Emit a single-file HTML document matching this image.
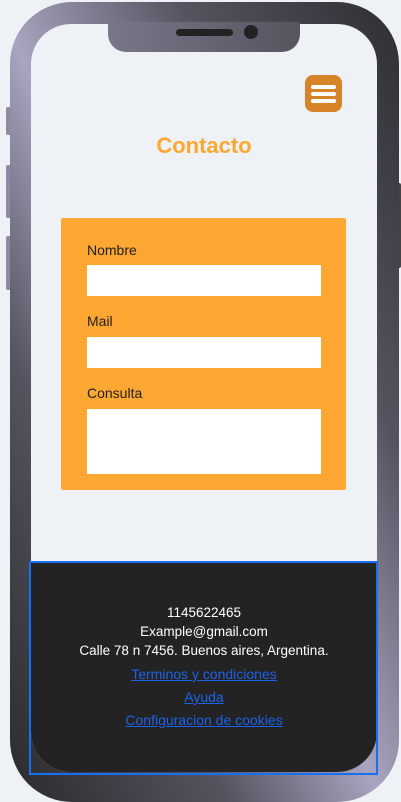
<!DOCTYPE html>
<html><head><meta charset="utf-8"><style>
body{margin:0;width:401px;height:793px;background:#eef1f6;position:relative;overflow:hidden;font-family:"Liberation Sans",sans-serif}
.frame{position:absolute;left:10px;top:2px;width:389px;height:800px;border-radius:62px;
background:linear-gradient(to bottom left,#2e2e33 0%,#55535f 28%,#a9a4c0 52%,#55535f 72%,#2a2a2c 100%);}
.btn{position:absolute;background:#8f8aa3;border-radius:2px}
.screen{position:absolute;left:31px;top:24px;width:346px;height:748px;background:#eef1f6;border-radius:40px;overflow:hidden}
.notch{position:absolute;left:108px;top:22px;width:192px;height:30px;background:linear-gradient(90deg,#7a7689,#56545f);border-radius:0 0 18px 18px}
.spk{position:absolute;left:176px;top:29px;width:57px;height:7px;border-radius:4px;background:#222}
.cam{position:absolute;left:244px;top:25px;width:14px;height:14px;border-radius:50%;background:#222}
.menu{position:absolute;left:274px;top:51px;width:37px;height:37px;background:#d78428;border-radius:8px}
.menu i{position:absolute;left:6px;width:25px;height:4px;background:#fff;border-radius:2px}
h1{position:absolute;left:0;width:346px;top:109px;margin:0;text-align:center;color:#ffa733;font-size:22px;font-weight:bold}
.form{position:absolute;left:30px;top:194px;width:285px;height:272px;background:#ffa733;border-radius:2px}
.form label{position:absolute;left:26px;font-size:14px;color:#222}
.form div{position:absolute;left:26px;width:234px;background:#fff}
.foot{position:absolute;left:0;top:537px;width:346px;height:211px;background:#232323;color:#fff;text-align:center;font-size:13.5px}
.foot a{color:#1d63e8;text-decoration:underline;display:block;font-size:14px}
.bb{position:absolute;left:29px;top:561px;width:345px;height:210px;border:2px solid #1a6ef0}
</style></head><body>
<div class="btn" style="left:6px;top:107px;width:5px;height:28px"></div>
<div class="btn" style="left:6px;top:165px;width:5px;height:53px"></div>
<div class="btn" style="left:6px;top:236px;width:5px;height:54px"></div>
<div class="btn" style="left:396px;top:183px;width:5px;height:85px;background:#444"></div>
<div class="frame"></div>
<div class="screen">
<div class="menu"><i style="top:10px"></i><i style="top:17px"></i><i style="top:24px"></i></div>
<h1>Contacto</h1>
<div class="form">
<label style="top:24px">Nombre</label><div style="top:47px;height:31px"></div>
<label style="top:95px">Mail</label><div style="top:119px;height:31px"></div>
<label style="top:167px">Consulta</label><div style="top:191px;height:65px"></div>
</div>
<div class="foot">
<div style="margin-top:42px;line-height:19px">1145622465<br>Example@gmail.com<br>Calle 78 n 7456. Buenos aires, Argentina.</div>
<a style="margin-top:3px;line-height:23px">Terminos y condiciones</a>
<a style="line-height:23px">Ayuda</a>
<a style="line-height:23px">Configuracion de cookies</a>
</div>
</div>
<div class="bb"></div>
<div class="notch"></div><div class="spk"></div><div class="cam"></div>
</body></html>
